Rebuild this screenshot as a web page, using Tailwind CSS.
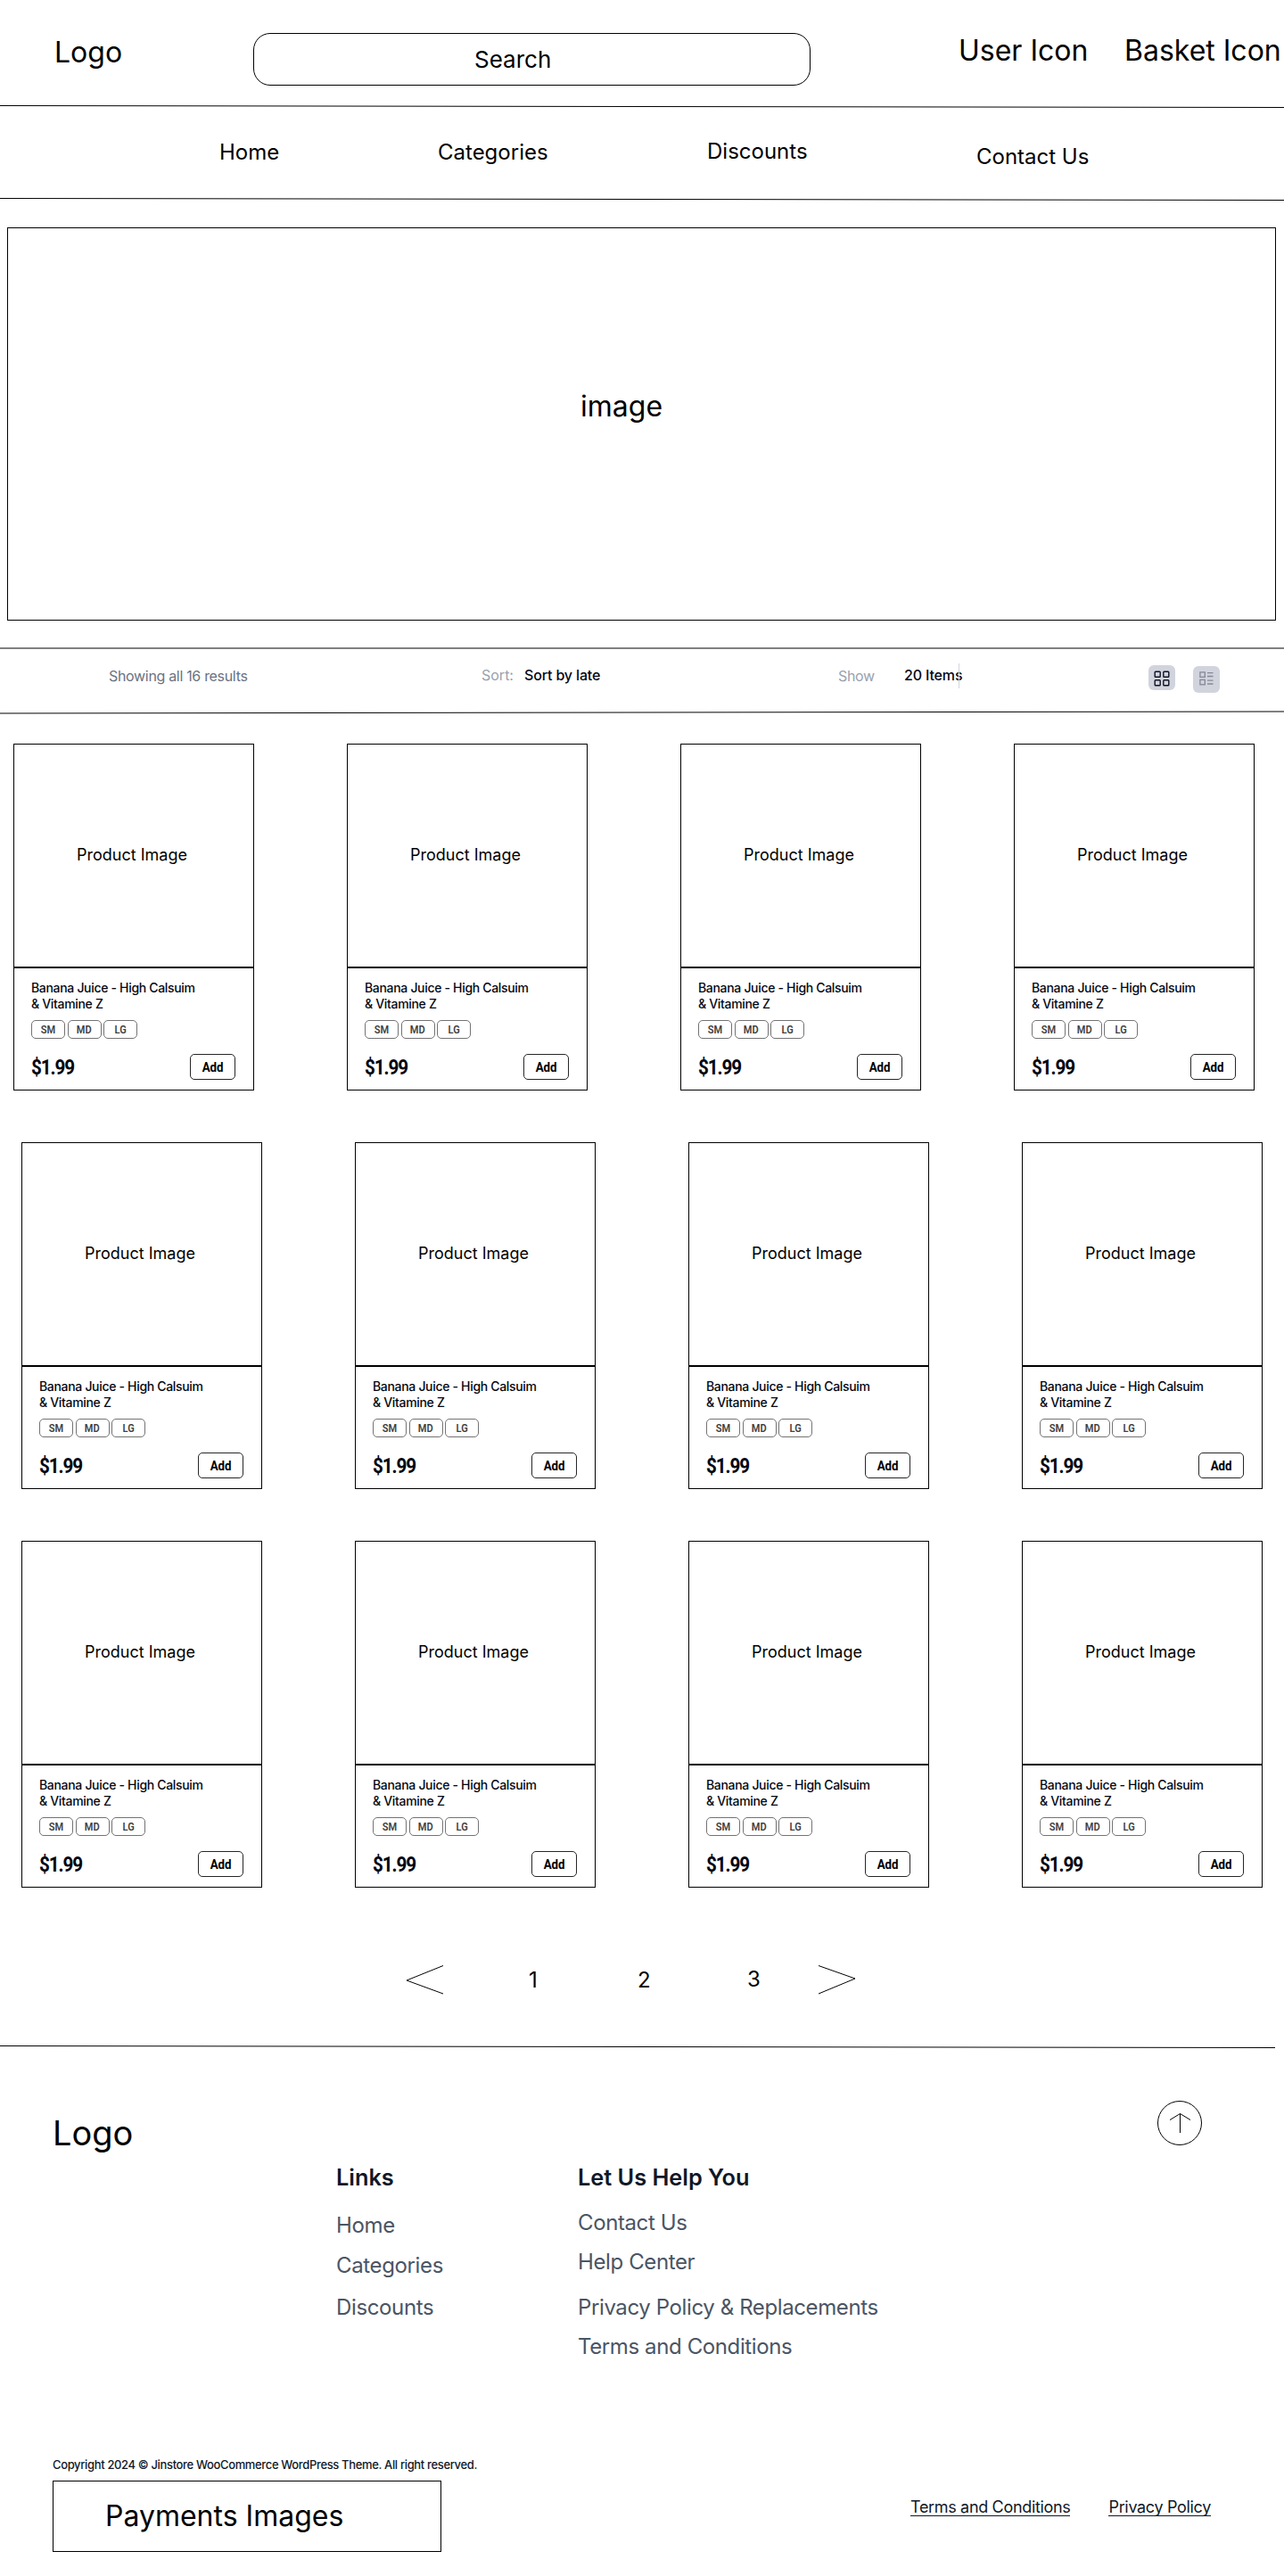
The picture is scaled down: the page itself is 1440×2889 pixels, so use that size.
<!DOCTYPE html>
<html lang="en">
<head>
<meta charset="utf-8">
<title>Jinstore</title>
<script src="https://cdn.jsdelivr.net/npm/@tailwindcss/browser@4"></script>
</head>
<body class="w-[1440px] overflow-x-hidden bg-white font-['Inter',sans-serif] text-black">

<header class="flex h-[118px] items-start text-[32px] leading-8 whitespace-nowrap">
  <div class="mt-[43px] w-[284px] pl-[61px]">Logo</div>
  <div class="mt-[37px] h-[59px] w-[625px] rounded-[19px] border border-black pt-4 pl-[247px] text-[26px] leading-[26px]">Search</div>
  <div class="mt-[41px] ml-[166px] w-[186px]">User Icon</div>
  <div class="mt-[41px]">Basket Icon</div>
</header>
<svg class="block" width="1440" height="3" viewBox="0 0 1440 3"><path d="M0 .5L1440 2.5" stroke="#000"/></svg>

<nav class="flex h-[101px] items-start pl-[246px] text-2xl leading-6 whitespace-nowrap">
  <a class="mt-[38px] w-[245px]">Home</a>
  <a class="mt-[38px] w-[302px]">Categories</a>
  <a class="mt-[37px] w-[302px]">Discounts</a>
  <a class="mt-[43px]">Contact Us</a>
</nav>
<svg class="block" width="1440" height="3" viewBox="0 0 1440 3"><path d="M0 .5L1440 2.5" stroke="#000"/></svg>

<section class="mt-[30px] ml-2 h-[441px] w-[1423px] border border-black pt-[184px] pl-[642px] text-[32px] leading-8">image</section>

<div class="mt-[30px] h-0.5 bg-[#808080]"></div>
<div class="flex h-[69px] items-start text-base leading-4 whitespace-nowrap">
  <div class="mt-[22px] w-[540px] pl-[122px] tracking-[-0.32px] text-gray-500">Showing all 16 results</div>
  <div class="mt-[21px] w-12 text-gray-400">Sort:</div>
  <div class="mt-[21px] w-[352px] font-medium tracking-[-0.15px] text-gray-950">Sort by late</div>
  <div class="mt-[22px] w-[74px] tracking-[-0.32px] text-gray-400">Show</div>
  <div class="relative mt-[21px] w-[274px] font-medium tracking-[-0.15px] text-gray-950">20 Items<span class="absolute -top-[5px] left-[61px] h-7 w-px bg-gray-300"></span></div>
  <button class="mt-[18px] flex h-7 w-[30px] justify-center rounded-md bg-[#d1d4dd] pt-1.5">
    <svg width="18" height="18" viewBox="0 0 18 18" fill="none" stroke="#0f1225" stroke-width="1.4"><rect x="1.2" y="1.2" width="6" height="6" rx=".8"/><rect x="10.8" y="1.2" width="6" height="6" rx=".8"/><rect x="1.2" y="10.8" width="6" height="6" rx=".8"/><rect x="10.8" y="10.8" width="6" height="6" rx=".8"/></svg>
  </button>
  <button class="mt-[19px] ml-5 flex h-[30px] w-[30px] justify-center rounded-md bg-[#d1d4dd] pt-1.5">
    <svg width="16" height="16" viewBox="0 0 16 16" fill="none" stroke="#858996" stroke-width="1.3"><rect x=".9" y=".9" width="5.4" height="5.4"/><rect x=".9" y="9.4" width="5.4" height="5.4"/><path d="M9 1.7h6.5M9 5.5h6.5M9 10.2h6.5M9 14h6.5"/></svg>
  </button>
</div>
<svg class="block" width="1440" height="4" viewBox="0 0 1440 4"><path d="M0 3L1440 1" stroke="#000"/></svg>

<main id="products" class="mt-[33px] flex flex-col gap-[58px]"></main>

<div class="mt-[86px] flex h-[91px] items-start text-2xl leading-6">
  <svg class="ml-[455px]" width="43" height="34" viewBox="0 0 43 34" fill="none" stroke="#000"><path d="M42 1.5L1 18L42 33"/></svg>
  <span class="mt-1.5 ml-[95px] w-[122px]">1</span>
  <span class="mt-1.5 w-[123px]">2</span>
  <span class="mt-[5px] w-[79px]">3</span>
  <svg width="43" height="34" viewBox="0 0 43 34" fill="none" stroke="#000"><path d="M1 1.5L42 16L1 33"/></svg>
</div>

<footer>
  <svg class="block" width="1430" height="4" viewBox="0 0 1430 4"><path d="M0 .5L1430 2.5" stroke="#000"/></svg>
  <div class="flex h-[460px] items-start whitespace-nowrap">
    <div class="mt-[75px] w-[377px] pl-[59px] text-[38px] leading-[38px]">Logo</div>
    <div class="flex w-[271px] flex-col pt-[131px] text-2xl leading-6 tracking-[-0.36px] text-gray-600">
      <h3 class="text-[25.3px] leading-[25px] font-semibold tracking-normal text-gray-900">Links</h3>
      <a class="mt-[30px]">Home</a>
      <a class="mt-[21px]">Categories</a>
      <a class="mt-[23px]">Discounts</a>
    </div>
    <div class="flex w-[649px] flex-col pt-[131px] text-2xl leading-6 tracking-[-0.39px] text-gray-600">
      <h3 class="text-[25.3px] leading-[25px] font-semibold tracking-normal text-gray-900">Let Us Help You</h3>
      <a class="mt-[27px]">Contact Us</a>
      <a class="mt-5">Help Center</a>
      <a class="mt-[27px]">Privacy Policy &amp; Replacements</a>
      <a class="mt-5">Terms and Conditions</a>
    </div>
    <svg class="mt-[57px]" width="52" height="52" viewBox="0 0 52 52" fill="none" stroke="#000"><circle cx="26" cy="26" r="24.5"/><path d="M26.5 37V15.5M15 22.5L26.5 15.5L38 22.5"/></svg>
  </div>
  <div class="flex items-start whitespace-nowrap">
    <div class="w-[1021px] pl-[59px]">
      <p class="text-[13px] leading-[13px] font-medium tracking-[-0.35px] text-gray-900">Copyright 2024 © Jinstore WooCommerce WordPress Theme. All right reserved.</p>
      <div class="mt-[11px] h-20 w-[436px] border border-black pt-[23px] pl-[58px] text-[32px] leading-8">Payments Images</div>
    </div>
    <div class="mt-[45px] flex gap-[43px] text-lg leading-[18px] tracking-[-0.33px] text-gray-900">
      <a class="border-b border-gray-900">Terms and Conditions</a>
      <a class="border-b border-gray-900">Privacy Policy</a>
    </div>
  </div>
</footer>

<script>
const chip = size => `
  <span class="flex h-[21px] w-[38px] items-center justify-center rounded-[5px] border border-neutral-500 font-['Roboto',sans-serif] text-xs leading-none font-semibold text-neutral-700"><span class="inline-block scale-x-[0.92]">${size}</span></span>`;
const card = () => `
  <article class="h-[389px] w-[270px] border border-black">
    <div class="h-[251px] border-b-2 border-black pt-[115px] pl-[70px] text-lg leading-[18px]">Product Image</div>
    <div class="pt-[13px] pr-5 pl-[19px]">
      <h2 class="text-sm leading-[18px] font-medium tracking-[-0.32px] whitespace-nowrap text-gray-950">Banana Juice - High Calsuim<br>&amp; Vitamine Z</h2>
      <div class="mt-[9px] flex gap-[2.5px]">${['SM', 'MD', 'LG'].map(chip).join('')}</div>
      <div class="mt-[17px] flex items-center justify-between font-['Roboto',sans-serif] font-bold">
        <span class="inline-block origin-left scale-x-[0.9] text-[23px] leading-[31px] -mb-0.5 tracking-[-1.2px] text-gray-950">$1.99</span>
        <button class="h-[29px] w-[51px] rounded-[5px] border border-neutral-800 text-sm leading-none"><span class="inline-block scale-x-[0.95]">Add</span></button>
      </div>
    </div>
  </article>`;
// The first row starts further left than the rows under it.
document.getElementById('products').innerHTML = ['ml-[15px]', 'ml-6', 'ml-6']
  .map(offset => `<div class="${offset} flex gap-[104px]">${card().repeat(4)}</div>`).join('');
</script>
</body>
</html>
